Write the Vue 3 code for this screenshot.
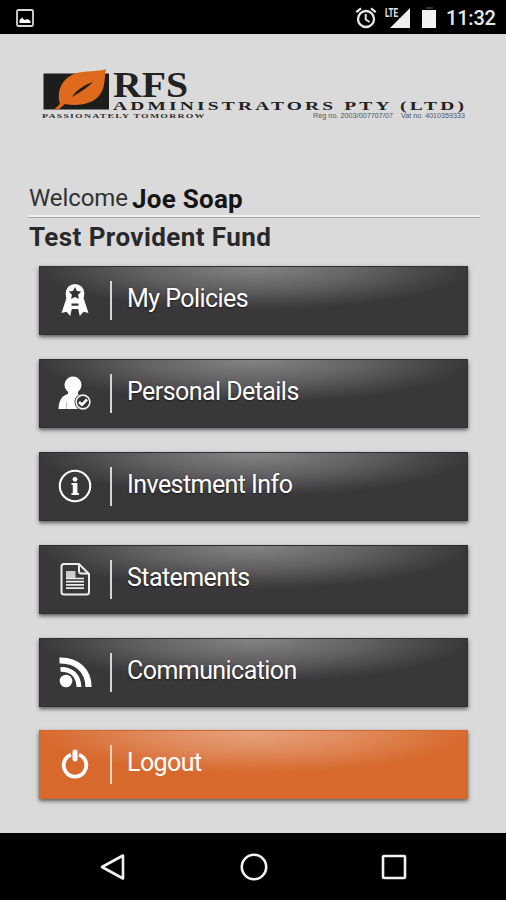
<template>
    <div class="screen">
        <header class="status-bar">
            <svg class="photo-icon" width="18" height="18" viewBox="0 0 18 18">
                <rect x="1" y="1" width="16" height="16" rx="1.5" fill="none" stroke="#d8d8d8" stroke-width="1.8" />
                <path d="M3.5 14V11L6 8.5L8.5 11L11.5 10L14.5 12V14Z" fill="#fff" />
            </svg>
            <div class="status-right">
                <svg class="alarm-icon" width="22" height="22" viewBox="0 0 22 22" fill="none" stroke="#e6e6e6">
                    <circle cx="11" cy="12" r="8" stroke-width="2.300" />
                    <path d="M10.7 7V12.5L14.5 15" stroke-width="2" />
                    <path d="M1.3 5.2L6 1.3M16 1.3L20.7 5.2" stroke-width="2.2" />
                </svg>
                <svg class="signal-icon" width="26" height="22" viewBox="0 0 26 22">
                    <text x="0" y="10" class="lte" textLength="13" lengthAdjust="spacingAndGlyphs">LTE</text>
                    <path d="M25 1V21H5L14 12V11.500L15 11Z" fill="#eee" />
                </svg>
                <svg class="battery-icon" width="14" height="21" viewBox="0 0 14 21">
                    <rect x="4" y="0" width="7" height="2" fill="#333" />
                    <rect x="0" y="3" width="14" height="18" fill="#f2f2f2" />
                </svg>
                <span class="clock">11:32</span>
            </div>
        </header>

        <main class="content">
            <svg class="logo" width="430" height="54" viewBox="40 67 430 54">
                <rect x="43.500" y="73.500" width="65.500" height="36" fill="#1d1d1b" />
                <path d="M54 109.500L60 104C57 95 59 83 70 76C80 69.500 93 73 106 69C104 78 106 89 98 97C90 105 76 106 65 104L58.500 109.500Z" fill="#df6a1d" />
                <path d="M72 97C76 90 86 84 93 82C87 88 80 92 72 97Z" fill="#1d1d1b" />
                <text x="113" y="97" class="serif" font-size="36" textLength="75" lengthAdjust="spacingAndGlyphs">RFS</text>
                <g transform="translate(113 110) scale(1.500 1)">
                    <text x="0" y="0" class="serif" font-size="13" textLength="234">ADMINISTRATORS PTY (LTD)</text>
                </g>
                <g transform="translate(42 117.500) scale(1.400 1)">
                    <text x="0" y="0" class="serif tagline" font-size="7" textLength="116">PASSIONATELY TOMORROW</text>
                </g>
                <text x="313" y="117.500" class="reg" textLength="80" lengthAdjust="spacingAndGlyphs">Reg no. 2003/007707/07</text>
                <text x="401" y="117.500" class="reg" textLength="64" lengthAdjust="spacingAndGlyphs">Vat no. 4010359333</text>
            </svg>

            <div class="welcome">
                <span class="greeting">Welcome</span>
                <span class="member">{{ member.name }}</span>
            </div>
            <h1 class="fund">{{ member.fund }}</h1>

            <nav class="menu">
                <button v-for="item in menuItems" :key="item.id" type="button" class="menu-item" :class="item.id">
                    <svg class="menu-icon" width="36" height="36" viewBox="0 0 36 36">
                        <g v-if="item.id === 'policies'">
                            <path d="M9.500 16L4.500 31L9.500 29.800L13.200 34L14.800 27H21.200L22.800 34L26.500 29.800L31.500 31L26.500 16Z" fill="#fff" />
                            <path d="M14.500 21.500H21.500V23.700H14.500ZM15.300 27H20.700V35H14Z" fill="#343235" />
                            <path d="M18 2L21.500 2.700L24.500 4.500L26.500 7.500L27.300 11L27 15L25.500 18L23 20.500H13L10.500 18L9 15L8.700 11L9.500 7.500L11.500 4.500L14.500 2.700Z" fill="#fff" />
                            <path d="M18 5L19.900 9L24.200 9.600L21.100 12.700L21.900 17L18 14.900L14.100 17L14.900 12.700L11.800 9.600L16.100 9Z" fill="#343235" />
                        </g>
                        <g v-else-if="item.id === 'personal'">
                            <ellipse cx="16" cy="10" rx="8.500" ry="8.500" fill="#fff" />
                            <path d="M11 14H21V19C25 21 28 23 29 34H1.500C2 25 5 20.500 11 19Z" fill="#fff" />
                            <path d="M9.500 27V34" stroke="#aaa" stroke-width=".8" />
                            <circle cx="26" cy="27" r="8.500" fill="#343235" />
                            <circle cx="26" cy="27" r="6.900" fill="none" stroke="#eee" stroke-width="1.600" />
                            <path d="M22 27L25 29.700L30 24.500" fill="none" stroke="#fff" stroke-width="2.600" />
                        </g>
                        <g v-else-if="item.id === 'investment'">
                            <circle cx="18" cy="18" r="15.200" fill="none" stroke="#fff" stroke-width="2.100" />
                            <circle cx="18" cy="11.300" r="2.400" fill="#fff" />
                            <path d="M14.500 15H20.400V25H21.900V27H14.500V25H15.800V17H14.500Z" fill="#fff" />
                        </g>
                        <g v-else-if="item.id === 'statements'" fill="none" stroke="#eee">
                            <path d="M7 3H22L32 13V31Q32 33.500 29.500 33.500H7Q4.500 33.500 4.500 31V5.500Q4.500 3 7 3Z" stroke-width="2" />
                            <path d="M22 3V10Q22 12.500 24.500 12.500H32" stroke-width="2" />
                            <rect x="9" y="10" width="9.500" height="7" fill="#ccc" stroke="none" />
                            <path d="M9 17.500H27M9 20.700H27M9 23.900H27M9 27.100H27" stroke-width="1.700" />
                        </g>
                        <g v-else-if="item.id === 'communication'">
                            <circle cx="9" cy="27" r="6.300" fill="#fff" />
                            <path d="M3.500 15.300C14 15 21.500 21 22 33" fill="none" stroke="#fff" stroke-width="4.800" />
                            <path d="M2.500 6.500C20 6 31.500 17 31.500 33" fill="none" stroke="#fff" stroke-width="6.200" />
                        </g>
                        <g v-else fill="none" stroke="#fff" stroke-linecap="round">
                            <path d="M14 8.700A11.300 11.300 0 1 0 22 8.700" stroke-width="3.800" stroke-linecap="butt" />
                            <path d="M18 6V13" stroke-width="5" />
                        </g>
                    </svg>
                    <span class="divider"></span>
                    <span class="label">{{ item.label }}</span>
                </button>
            </nav>
        </main>

        <footer class="nav-bar">
            <svg width="28" height="28" viewBox="0 0 28 28"><path d="M3 14L24 2.500V25.500Z" /></svg>
            <svg width="28" height="28" viewBox="0 0 28 28"><circle cx="14" cy="14" r="12.200" /></svg>
            <svg width="28" height="28" viewBox="0 0 28 28"><rect x="3" y="3" width="22" height="22" rx="1" /></svg>
        </footer>
    </div>
</template>

<script setup>
    import { ref } from 'vue';

    const member = ref({
        name: 'Joe Soap',
        fund: 'Test Provident Fund'
    });

    const menuItems = [
        { id: 'policies', label: 'My Policies' },
        { id: 'personal', label: 'Personal Details' },
        { id: 'investment', label: 'Investment Info' },
        { id: 'statements', label: 'Statements' },
        { id: 'communication', label: 'Communication' },
        { id: 'logout', label: 'Logout' }
    ];
</script>

<style>
    body{
        margin: 0;
        background: #dadada;
    }
</style>

<style scoped>
    .screen{
        width: 506px;
        height: 900px;
        display: flex;
        flex-direction: column;
        background: #dadada;
        font-family: Roboto, "Liberation Sans", sans-serif;
        overflow: hidden;
    }
    .status-bar{
        height: 34px;
        box-sizing: border-box;
        flex-shrink: 0;
        display: flex;
        align-items: center;
        justify-content: space-between;
        padding: 1px 11px 0 16px;
        background: #000;
    }
    .status-right{
        display: flex;
        align-items: center;
    }
    .signal-icon{
        margin-left: 8px;
    }
    .battery-icon{
        margin: 0 10px 0 11px;
    }
    .lte{
        font-size: 12px;
        font-weight: 700;
        fill: #e6e6e6;
    }
    .clock{
        width: 49px;
        font-size: 20px;
        font-weight: 500;
        line-height: 32px;
        letter-spacing: -0.2px;
        color: #e8e8e8;
        white-space: nowrap;
    }
    .content{
        flex: 1;
        padding: 33px 26px 0 28px;
    }
    .logo{
        display: block;
        margin-left: 12px;
        overflow: visible;
    }
    .serif{
        font-family: "Liberation Serif", serif;
        font-weight: 700;
        fill: #222;
    }
    .tagline{
        fill: #333;
    }
    .reg{
        font-family: "Liberation Sans", sans-serif;
        font-size: 6.5px;
        fill: #555;
    }
    .welcome{
        height: 36px;
        margin-top: 60px;
        display: flex;
        align-items: flex-start;
        border-bottom: 1px solid #a8a8a8;
        box-shadow: inset 0 -2px 0 #eee;
        white-space: nowrap;
    }
    .greeting{
        width: 103px;
        padding-left: 1px;
        font-size: 24px;
        line-height: 34px;
        letter-spacing: -0.1px;
        color: #333;
    }
    .member{
        font-size: 26px;
        font-weight: 700;
        line-height: 37px;
        letter-spacing: 0.25px;
        color: #151515;
    }
    .fund{
        margin: 0 0 0 1px;
        font-size: 26px;
        font-weight: 700;
        line-height: 39px;
        letter-spacing: 0.42px;
        color: #292929;
    }
    .menu{
        display: flex;
        flex-direction: column;
        gap: 24px;
        margin: 9px 12px 0 11px;
    }
    .menu-item{
        height: 69px;
        box-sizing: border-box;
        display: flex;
        align-items: center;
        padding: 0 0 1px 17px;
        border: 1px solid #303032;
        border-radius: 0;
        background: radial-gradient(ellipse 218px 43px at 50% 0, rgba(255, 255, 255, .38), rgba(255, 255, 255, .21) 50%, rgba(255, 255, 255, .06) 85%, transparent) #39373a;
        box-shadow: 0 2px 4px rgba(0, 0, 0, .6);
        font-family: inherit;
        color: #fff;
        text-shadow: 0 1px 2px rgba(0, 0, 0, .6);
    }
    .menu-item.logout{
        margin-top: -1px;
        border-color: #d5672b;
        background-color: #d7692d;
        text-shadow: none;
    }
    .menu-icon{
        flex-shrink: 0;
    }
    .divider{
        width: 2px;
        height: 39px;
        margin-left: 17px;
        background: #d5d5d5;
    }
    .logout .divider{
        background: #f3cfb9;
    }
    .label{
        margin-left: 15px;
        font-size: 25px;
        line-height: 30px;
        letter-spacing: -0.56px;
        padding-bottom: 3px;
        white-space: nowrap;
    }
    .nav-bar{
        height: 67px;
        flex-shrink: 0;
        box-sizing: border-box;
        display: flex;
        justify-content: space-between;
        align-items: center;
        padding: 0 98px 0 99px;
        background: #000;
    }
    .nav-bar path, .nav-bar circle, .nav-bar rect{
        fill: none;
        stroke: #f2f2f2;
        stroke-width: 2.6;
        stroke-linejoin: round;
    }
</style>
